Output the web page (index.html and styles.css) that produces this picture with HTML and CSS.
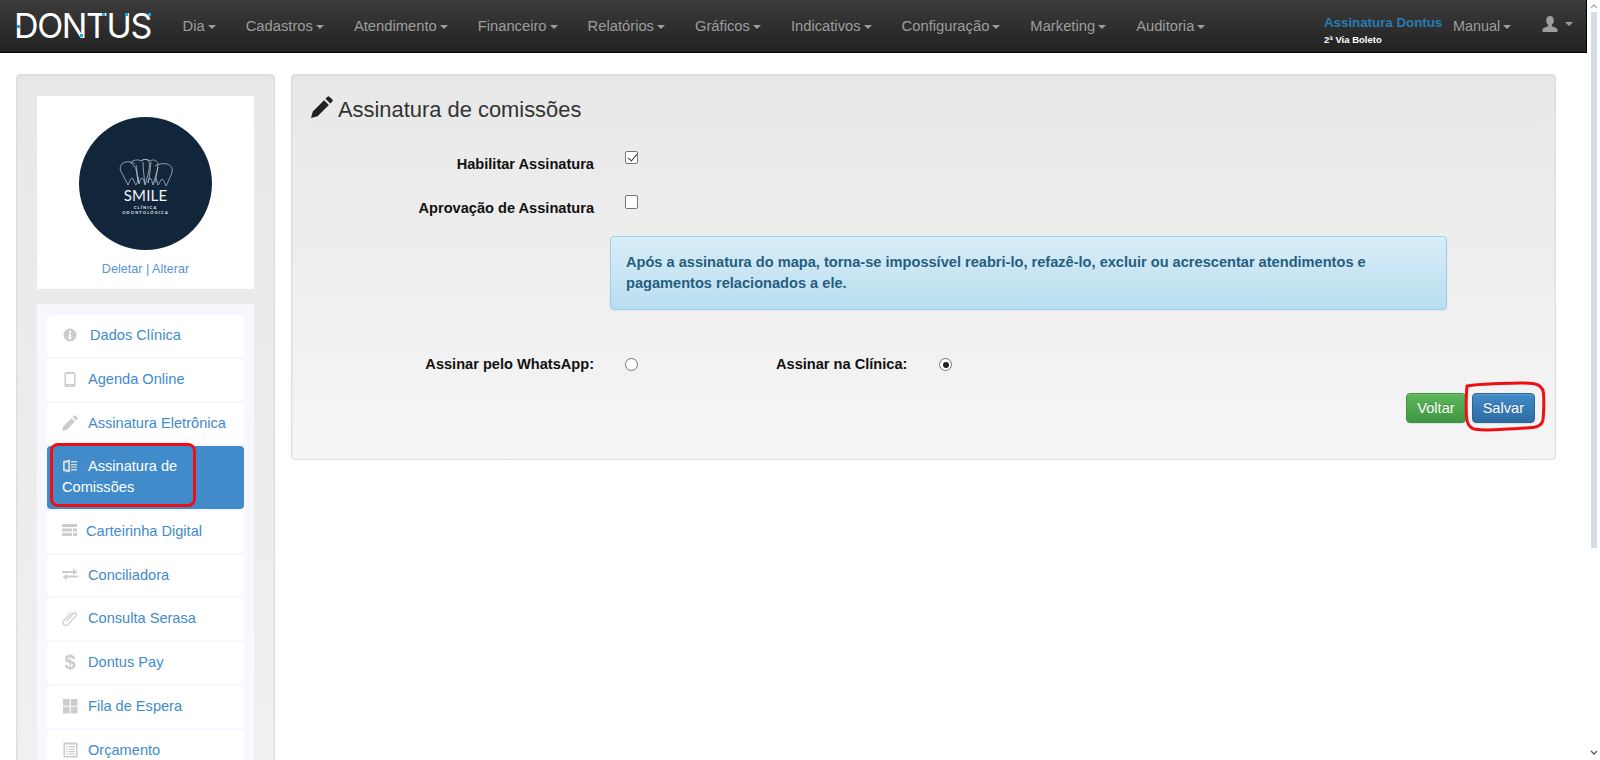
FILE: index.html
```html
<!DOCTYPE html>
<html lang="pt-BR">
<head>
<meta charset="utf-8">
<title>Assinatura de comissões</title>
<link rel="stylesheet" href="styles.css">
</head>
<body>
<div class="page">
  <nav class="navbar">
    <div class="brand">DONTUS
      <i class="dot dot-d"></i><i class="dot dot-n"></i><i class="dot dot-t"></i><i class="dot dot-u"></i><i class="dot dot-s"></i>
    </div>
    <ul class="nav-main">
      <li>Dia<b class="caret"></b></li>
      <li>Cadastros<b class="caret"></b></li>
      <li>Atendimento<b class="caret"></b></li>
      <li>Financeiro<b class="caret"></b></li>
      <li>Relatórios<b class="caret"></b></li>
      <li>Gráficos<b class="caret"></b></li>
      <li>Indicativos<b class="caret"></b></li>
      <li>Configuração<b class="caret"></b></li>
      <li>Marketing<b class="caret"></b></li>
      <li>Auditoria<b class="caret"></b></li>
    </ul>
    <div class="nav-right">
      <div class="sign-links">
        <span class="sign-title">Assinatura Dontus</span>
        <span class="sign-sub">2ª Via Boleto</span>
      </div>
      <div class="nav-manual">Manual<b class="caret"></b></div>
      <div class="nav-user">
        <svg class="user-icon" viewBox="0 0 16 16"><path d="M8 0c2.400 0 3.800 1.800 3.800 4.200 0 1.900-.8 3.700-1.900 4.600v1.400c1.700.6 5.100 1.500 5.600 3V16H.5v-2.800c.5-1.500 3.900-2.400 5.600-3V8.800C5 7.900 4.200 6.100 4.200 4.200 4.200 1.800 5.600 0 8 0z"/></svg>
        <b class="caret"></b>
      </div>
    </div>
  </nav>

  <div class="content">
    <aside class="sidebar">
      <div class="clinic-card">
        <div class="clinic-logo">
          <svg class="teeth" viewBox="0 0 54 28">
            <path d="M16 5C12 2 6 2 3 5 0 8 1 12 4 16c2 3 3 7 5 10 1-2 2-6 4-7 2 1 2 5 4 7 2-3 2-6 3-8"/>
            <path d="M12 4C13 1 19 0 22 2c2-2 6-2 8 0 1 5 0 12-2 17-1 3-1 5-2 7-1-3-1-6-3-7-2 1-2 4-3 6-2-5-2-11-3-15-1-2-3-4-5-6z"/>
            <path d="M22 2c2-2 7-2 9 0 3-2 7-1 8 3 0 5-2 10-3 14-1 2-1 5-2 7-1-3-1-6-3-7-1 1-2 3-2 5"/>
            <path d="M36 7c3-2 8-3 12-2 4 1 6 4 5 8-1 4-3 7-4 10-1 2-1 3-2 4-1-2-2-6-4-7-2 1-2 4-4 6-1-3-1-5-2-7"/>
            <path d="M17 6c1 5 1 11 3 18M24 3c0 7 1 14 2 22M32 3c-1 7-1 14-3 21M39 8c-1 5-2 11-3 16"/>
          </svg>
          <span class="smile">SMILE</span>
          <span class="smile-sub">CLÍNICA</span>
          <span class="smile-sub">ODONTOLÓGICA</span>
        </div>
        <div class="clinic-links">Deletar | Alterar</div>
      </div>
      <ul class="side-menu">
        <li><svg class="ico ico-wide" viewBox="0 0 16 16"><path fill-rule="evenodd" d="M8 1.500a6.500 6.500 0 110 13 6.500 6.500 0 010-13zM7 4v2h2V4zM6.500 7v1H7v3h-.5v1h3v-1H9V7z"/></svg>Dados Clínica</li>
        <li><svg class="ico" viewBox="0 0 16 16"><path fill-rule="evenodd" d="M4 1h8a1.500 1.500 0 011.500 1.500v12A1.500 1.500 0 0112 16H4a1.500 1.500 0 01-1.500-1.500v-12A1.500 1.500 0 014 1zm0 2v10h8V3zm4 10.500a.8.8 0 100 1.600.8.8 0 000-1.600z"/></svg>Agenda Online</li>
        <li><svg class="ico" viewBox="0 0 16 16"><path d="M0 16l1.300-4.800 8.200-8.200 3.500 3.500-8.200 8.200zM10.500 2L12 .5a1 1 0 011.400 0l2.100 2.100a1 1 0 010 1.400L14 5.500z"/></svg>Assinatura Eletrônica</li>
        <li class="active"><svg class="ico" viewBox="0 0 16 16"><path fill-rule="evenodd" d="M1 3l7-1.500v13L1 13zm1.800 2v6.200l3.400.6V4.300zM9 3h6v1.500H9zm0 3h6v1.200H9zm0 2.500h6v1.200H9zm0 2.500h6v1.500H9z"/></svg>Assinatura de Comissões<span class="annot-box"></span></li>
        <li><svg class="ico ico-narrow" viewBox="0 0 16 16"><path d="M0 1h15v3H0zM0 5.500h10v3H0zM11 5.500h4v3h-4zM0 10h10v3H0zM11 10h4v3h-4z"/></svg>Carteirinha Digital</li>
        <li><svg class="ico" viewBox="0 0 16 16"><path d="M0 4h11V1.500L15.500 5 11 8V6H0zM16 8.500H5V7L.5 10 5 13v-2.500h11z"/></svg>Conciliadora</li>
        <li><svg class="ico ico-clip" viewBox="0 0 16 16"><path d="M4.500 10.800l6.800-7.300c.8-.8 2-.9 2.700-.2.800.7.700 2-.1 2.800l-7.800 8.300c-1.200 1.300-3.200 1.400-4.300.3-1.200-1.100-1.100-3 .1-4.300l7.300-7.800"/></svg>Consulta Serasa</li>
        <li><span class="dollar">$</span>Dontus Pay</li>
        <li><svg class="ico" viewBox="0 0 16 16"><path d="M1 1h6.700v6.700H1zM8.800 1h6.700v6.700H8.800zM1 8.800h6.700v6.700H1zM8.800 8.800h6.700v6.700H8.800z"/></svg>Fila de Espera</li>
        <li><svg class="ico" viewBox="0 0 16 16"><path fill-rule="evenodd" d="M1.500 .5h14v15h-14zm1.500 2v11.500h11V2.500zM4 4h1.500v1.300H4zm2.500 0H13v1.300H6.500zM4 6.500h1.500v1.300H4zm2.500 0H13v1.300H6.500zM4 9h1.500v1.300H4zm2.500 0H13v1.300H6.500zM4 11.500h1.500v1.300H4zm2.500 0H13v1.300H6.500z"/></svg>Orçamento</li>
      </ul>
    </aside>

    <main class="panel">
      <h2 class="legend">
        <svg class="legend-ico" viewBox="0 0 16 16"><path d="M0 16l1.300-4.800 8.200-8.200 3.500 3.500-8.200 8.200zM10.500 2L12 .5a1 1 0 011.400 0l2.100 2.100a1 1 0 010 1.400L14 5.500z"/></svg>Assinatura de comissões
      </h2>
      <div class="field first">
        <label class="label">Habilitar Assinatura</label>
        <input class="check" type="checkbox" checked>
      </div>
      <div class="field second">
        <label class="label">Aprovação de Assinatura</label>
        <input class="check" type="checkbox">
      </div>
      <div class="info">Após a assinatura do mapa, torna-se impossível reabri-lo, refazê-lo, excluir ou acrescentar atendimentos e pagamentos relacionados a ele.</div>
      <div class="field radios">
        <label class="label">Assinar pelo WhatsApp:</label>
        <input class="radio" type="radio" name="where">
        <label class="label-inline">Assinar na Clínica:</label>
        <input class="radio" type="radio" name="where" checked>
      </div>
      <div class="actions">
        <button class="btn btn-green">Voltar</button>
        <button class="btn btn-blue">Salvar</button>
        <svg class="annot-hand" viewBox="0 0 82 51"><path d="M3 5C14 3 25 3 36 2.500 48 2 60 1.500 69 2.500 76 3.500 79 7 79.500 12c.5 9 .5 18-.5 27-1 5-5 7-10 7.500-11 1-22 1.500-33 2-9 .5-20 .5-26-.5-5-1.500-7-6-7.500-12C2 26 2 15 3 5z"/></svg>
      </div>
    </main>
  </div>
</div>
<div class="scrollbar">
  <svg class="sb-arrow sb-up" viewBox="0 0 8 6"><path d="M1 5l3-3 3 3"/></svg>
  <div class="sb-thumb"></div>
  <svg class="sb-arrow sb-down" viewBox="0 0 8 6"><path d="M1 1l3 3 3-3"/></svg>
</div>
</body>
</html>
```

FILE: styles.css
```css
* { box-sizing: border-box; }
html, body { margin: 0; height: 760px; overflow: hidden; background: #fff; }
body { font-family: "Liberation Sans", Arial, sans-serif; font-size: 14.6px; color: #333; }
ul { list-style: none; margin: 0; padding: 0; }

.page { width: 1587px; height: 760px; overflow: hidden; }

/* Navbar */
.navbar {
  display: flex; align-items: center; height: 53px;
  background: linear-gradient(to bottom, #3c3c3c 0, #222 100%);
  border-bottom: 1px solid #000; border-right: 1px solid #000;
  position: relative;
}
.brand {
  position: relative; width: 167.5px; height: 52px; padding-left: 14px; flex: none;
  font-family: "Inter", sans-serif; font-weight: 400; font-size: 34px; line-height: 51px;
  letter-spacing: -1.4px; color: #fff; overflow: hidden; white-space: nowrap;
}
.dot { position: absolute; width: 3px; height: 3px; background: #1da7e0; }
.dot-d { left: 17px; top: 25px; }
.dot-n { left: 80px; top: 34px; }
.dot-t { left: 102px; top: 13px; }
.dot-u { left: 125px; top: 13px; }
.dot-s { left: 148px; top: 13px; }

.nav-main { display: flex; }
.nav-main li { padding: 0 15px; font-size: 14.75px; color: #9d9d9d; white-space: nowrap; }
.caret {
  display: inline-block; width: 0; height: 0; margin-left: 3px; vertical-align: middle;
  border-top: 4px solid #9d9d9d; border-left: 4px solid transparent; border-right: 4px solid transparent;
}
.nav-right { position: absolute; left: 1324px; top: 0; height: 52px; display: flex; }
.sign-links { display: flex; flex-direction: column; width: 129px; padding-top: 15px; }
.sign-title { font-weight: 700; font-size: 13.300px; line-height: 16px; color: #2a7cb3; white-space: nowrap; }
.sign-sub { font-weight: 700; font-size: 9.500px; line-height: 12px; margin-top: 3px; color: #fff; white-space: nowrap; }
.nav-manual { width: 89px; padding-top: 17px; font-size: 14.400px; line-height: 18px; color: #9d9d9d; white-space: nowrap; }
.nav-user { display: flex; align-items: center; height: 48px; }
.user-icon { width: 16px; height: 16px; fill: #9d9d9d; margin-right: 4px; }

/* Layout */
.content { display: flex; gap: 16px; padding: 21px 0 0 16px; align-items: flex-start; }

.sidebar {
  width: 259px; height: 1080px; flex: none; padding: 21px 20px 0;
  background: linear-gradient(to bottom, #e8e8e8 0, #f5f5f5 100%);
  border: 1px solid #dcdcdc; border-radius: 4px;
  box-shadow: inset 0 1px 3px rgba(0,0,0,.05);
}
.clinic-card { height: 193px; padding-top: 21px; background: #fff; }
.clinic-logo {
  width: 133px; height: 133px; margin: 0 auto; padding-top: 42px; border-radius: 50%;
  background: #12263b; color: #fff; display: flex; flex-direction: column; align-items: center;
}
.teeth { width: 54px; height: 28px; flex: none; fill: none; stroke: #c6ced6; stroke-width: .7; }
.smile { font-family: "Lato", sans-serif; font-size: 15px; line-height: 15px; margin-top: 1px; letter-spacing: .2px; color: #f2f4f6; }
.smile-sub { font-family: "Lato", sans-serif; font-weight: 700; font-size: 4px; line-height: 5px; letter-spacing: 1.150px; color: #e6eaee; }
.smile + .smile-sub { margin-top: 2px; }
.clinic-links { margin-top: 11px; text-align: center; font-size: 12.6px; line-height: 17px; color: #5b93d6; }

.side-menu { display: flex; flex-direction: column; gap: 2px; margin-top: 15px; padding: 11px 10px 10px; background: #f7f8ff; }
.side-menu li {
  position: relative; min-height: 41.75px; padding: 10px 15px 10.75px; border-radius: 4px;
  background: #fff; color: #428bca; line-height: 21px;
}
.side-menu li.active { background: #428bca; color: #fff; padding-bottom: 10.5px; }
.ico { width: 16px; height: 16px; margin-right: 10px; fill: #ccc; vertical-align: -3px; }
.ico-wide { margin-right: 12px; }
.ico-narrow { margin-right: 8px; }
.ico-clip { fill: none; stroke: #ccc; stroke-width: 1.300; }
.side-menu .active .ico { fill: #d5d9dc; }
.dollar {
  display: inline-block; width: 16px; margin-right: 10px; text-align: center;
  font-size: 20px; font-weight: 700; line-height: 21px; color: #ccc; vertical-align: top;
}
.annot-box {
  position: absolute; left: 3px; top: -3px; width: 146px; height: 64px;
  border: 3px solid #ee0f12; border-radius: 8px; pointer-events: none;
}

/* Main panel */
.panel {
  width: 1265px; height: 386px; flex: none; padding: 19px 20px 0 19px;
  background: linear-gradient(to bottom, #e8e8e8 0, #f5f5f5 100%);
  border: 1px solid #dcdcdc; border-radius: 4px;
  box-shadow: inset 0 1px 3px rgba(0,0,0,.05);
}
.legend {
  margin: 0; padding-bottom: 1px; height: 33px; font-weight: 400; font-size: 21.9px; line-height: 31px;
  color: #333; border-bottom: 1px solid #e3e3e3; white-space: nowrap;
}
.legend-ico { width: 22px; height: 22px; margin-right: 5px; fill: #222; vertical-align: -1px; }

.field { display: flex; align-items: flex-start; height: 21px; }
.field.first { margin-top: 27px; }
.field.second { margin-top: 23px; }
.field.radios { margin-top: 44px; align-items: center; }
.label { width: 283px; text-align: right; font-weight: 700; line-height: 21px; color: #111; }
.label-inline { margin-left: 138px; font-weight: 700; line-height: 21px; color: #111; }
.check, .radio {
  appearance: none; -webkit-appearance: none; margin: 0 0 0 31px; flex: none;
  width: 13px; height: 13px; background: #fff; border: 1px solid #767676; position: relative;
}
.check { border-radius: 2px; margin-top: -3px; }
.field.second .check { width: 13px; height: 14px; }
.check:checked::before {
  content: ""; position: absolute; left: 3.500px; top: 0; width: 4px; height: 8px;
  border: solid #333; border-width: 0 1.300px 1.300px 0; transform: rotate(40deg);
}
.radio { border-radius: 50%; }
.label-inline + .radio { margin-left: 32px; }
.radio:checked::before {
  content: ""; position: absolute; left: 2.500px; top: 2.500px; width: 6px; height: 6px; border-radius: 50%; background: #222;
}
.info {
  margin: 17px 0 0 299px; width: 837px; height: 74px; padding: 15px; border: 1px solid #9acfea; border-radius: 4px;
  background: linear-gradient(to bottom, #d9edf7 0, #b9def0 100%);
  box-shadow: inset 0 1px 0 rgba(255,255,255,.25), 0 1px 2px rgba(0,0,0,.05);
  color: #245e80; font-weight: 700; line-height: 21px; text-shadow: 0 1px 0 rgba(255,255,255,.2);
}
.actions { position: relative; display: flex; justify-content: flex-end; gap: 6px; margin-top: 18px; }
.btn {
  height: 30px; padding: 0 10px; border-radius: 4px; font: 14.6px/28px "Liberation Sans", Arial, sans-serif; color: #fff;
  text-shadow: 0 -1px 0 rgba(0,0,0,.2); box-shadow: inset 0 1px 0 rgba(255,255,255,.15), 0 1px 1px rgba(0,0,0,.075);
}
.btn-green { background: linear-gradient(to bottom, #5cb85c 0, #419641 100%); border: 1px solid #3e8f3e; }
.btn-blue { background: linear-gradient(to bottom, #428bca 0, #2d6ca2 100%); border: 1px solid #2b669a; }
.annot-hand {
  position: absolute; right: -11px; top: -12px; width: 82px; height: 51px;
  fill: none; stroke: #ee0f12; stroke-width: 3; stroke-linecap: round; pointer-events: none;
}

/* Scrollbar drawn in the screenshot */
.scrollbar { position: fixed; right: 0; top: 0; width: 13px; height: 760px; background: #fff; }
.sb-thumb { position: absolute; left: 4px; top: 12px; width: 6px; height: 536px; border-radius: 1px; background: #d3dde8; }
.sb-arrow { position: absolute; left: 3px; width: 8px; height: 6px; fill: none; stroke: #777; stroke-width: 1.300; }
.sb-up { top: 3px; stroke: #aaa; }
.sb-down { bottom: 4px; stroke: #555; }
```
